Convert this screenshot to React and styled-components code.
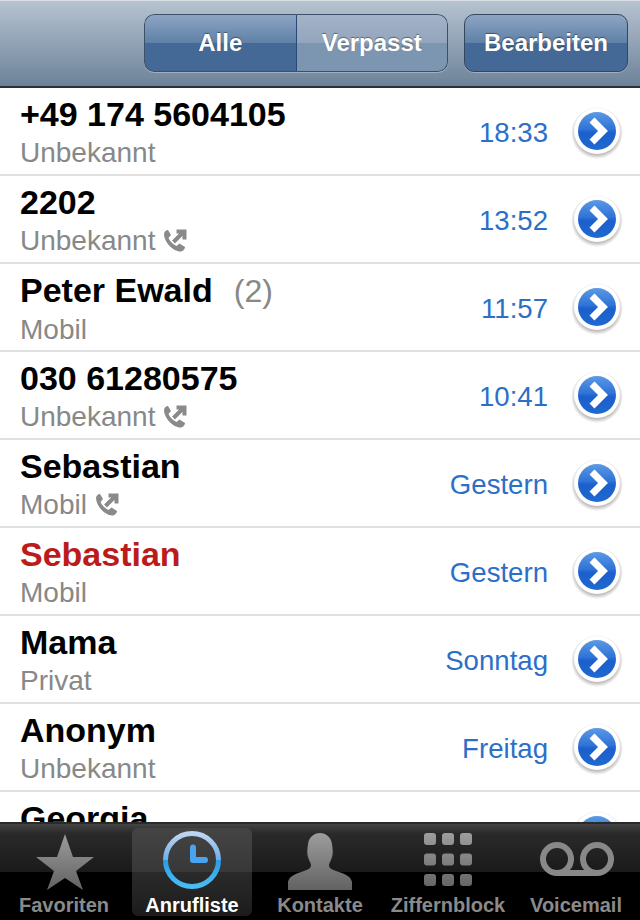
import React from 'react';
import styled, { createGlobalStyle } from 'styled-components';

const GlobalStyle = createGlobalStyle`
  html, body {
    margin: 0;
    padding: 0;
    background: #fff;
  }
`;

const Phone = styled.div`
  width: 640px;
  height: 920px;
  display: flex;
  flex-direction: column;
  overflow: hidden;
  font-family: 'Liberation Sans', Arial, sans-serif;
`;

const NavBar = styled.header`
  flex: none;
  box-sizing: border-box;
  height: 88px;
  padding: 14px 12px 0 144px;
  display: flex;
  gap: 16px;
  align-items: flex-start;
  border-bottom: 2px solid #2d3034;
  border-top: 1px solid #d9dee4;
  background: linear-gradient(#b6c3d0, #6d8299);
`;

const Segments = styled.div`
  display: flex;
  width: 304px;
  height: 58px;
  margin-top: -1px;
  border-radius: 10px;
  overflow: hidden;
  box-shadow: 0 1px 0 rgba(255, 255, 255, 0.3);
`;

const Segment = styled.div`
  flex: 1;
  display: flex;
  align-items: center;
  justify-content: center;
  color: #fff;
  font-size: 24px;
  font-weight: bold;
  text-shadow: 0 -1px 1px rgba(0, 0, 0, 0.4);
  background: ${({ $active }) =>
    $active
      ? 'linear-gradient(#8da5c4 0, #5f80a7 50%, #456996 50%, #456996 100%)'
      : 'linear-gradient(#a3b3c8 0, #93a5bc 50%, #7c95b0 50%, #7c95b0 100%)'};
  border: 1px solid #3c5068;
  border-width: ${({ $active }) => ($active ? '1px 1px 1px 1px' : '1px 1px 1px 0')};
  border-right-color: ${({ $active }) => ($active ? '#264a78' : '#3c5068')};
  border-radius: ${({ $active }) => ($active ? '10px 0 0 10px' : '0 10px 10px 0')};
`;

const EditButton = styled(Segment)`
  flex: none;
  box-sizing: border-box;
  width: 164px;
  height: 58px;
  margin-top: -1px;
  border-width: 1px;
  border-radius: 10px;
  border-color: #33485f;
  box-shadow: 0 1px 0 rgba(255, 255, 255, 0.3);
`;

const List = styled.div`
  flex: 1;
  min-height: 0;
  overflow: hidden;
`;

const Row = styled.div`
  box-sizing: border-box;
  height: 88px;
  display: flex;
  align-items: center;
  padding: 0 20px;
  border-bottom: 2px solid #e0e0e0;
  background: #fff;
`;

const Info = styled.div`
  flex: 1;
  min-width: 0;
  margin-top: 2px;
`;

const Name = styled.div`
  font-size: 34px;
  line-height: 38px;
  font-weight: bold;
  color: ${({ $missed }) => ($missed ? '#bb1b1b' : '#000')};
  white-space: nowrap;
`;

const Count = styled.span`
  margin-left: 21px;
  font-weight: normal;
  font-size: 32px;
  color: #888;
`;

const Sub = styled.div`
  display: flex;
  align-items: center;
  gap: 8px;
  margin-top: 4px;
  font-size: 28px;
  line-height: 32px;
  color: #888;
`;

const Time = styled.div`
  margin: 4px 21px 0 0;
  font-size: 27.6px;
  color: #2c6fc9;
  white-space: nowrap;
`;

const Disclosure = styled.svg`
  flex: none;
  width: 56px;
  height: 56px;
  margin-right: -5px;
`;

const TabBar = styled.nav`
  position: absolute;
  top: 822px;
  left: 0;
  width: 640px;
  height: 98px;
  box-sizing: border-box;
  display: grid;
  grid-template-columns: repeat(5, 128px);
  padding: 4px 0 4px;
  border-top: 2px solid #2a2a2a;
  background: linear-gradient(#444 0, #2a2a2a 10%, #1a1a1a 50%, #000 50%, #000 100%);
`;

const Tab = styled.div`
  display: flex;
  flex-direction: column;
  align-items: center;
  justify-content: flex-end;
  margin: 0 4px;
  border-radius: 6px;
  background: ${({ $active }) =>
    $active ? 'linear-gradient(#444 0, #383838 50%, #2a2a2a 50%, #1c1c1c 100%)' : 'none'};
`;

const TabIcon = styled.svg`
  width: 80px;
  height: 62px;
  flex: none;
`;

const TabLabel = styled.div`
  font-size: 20px;
  line-height: 24px;
  font-weight: bold;
  white-space: nowrap;
  position: relative;
  top: 1px;
  color: ${({ $active }) => ($active ? '#fff' : '#8a8a8a')};
`;

const calls = [
  { name: '+49 174 5604105', sub: 'Unbekannt', time: '18:33' },
  { name: '2202', sub: 'Unbekannt', time: '13:52', outgoing: true },
  { name: 'Peter Ewald', count: '(2)', sub: 'Mobil', time: '11:57' },
  { name: '030 61280575', sub: 'Unbekannt', time: '10:41', outgoing: true },
  { name: 'Sebastian', sub: 'Mobil', time: 'Gestern', outgoing: true },
  { name: 'Sebastian', sub: 'Mobil', time: 'Gestern', missed: true },
  { name: 'Mama', sub: 'Privat', time: 'Sonntag' },
  { name: 'Anonym', sub: 'Unbekannt', time: 'Freitag' },
  { name: 'Georgia', sub: 'Mobil', time: 'Freitag' },
];

function OutgoingIcon() {
  return (
    <svg width="24" height="24" viewBox="0 0 24 24">
      <path
        d="M1 5 C1 3 3 1 5 1 L8 6 L5.5 9 C7 12.5 10 15.5 13.5 17 L16.5 14.5 L22 18 C22 20 20 22.5 17.5 22.5 C10 22.5 1 13 1 5 Z"
        fill="#8a8a8a"
      />
      <path d="M10.5 13 L20 3.5 M13.5 2.5 L21.5 2.5 L21.5 10.5" stroke="#8a8a8a" strokeWidth="4" fill="none" />
    </svg>
  );
}

function DisclosureButton() {
  return (
    <Disclosure viewBox="0 0 56 56">
      <defs>
        <linearGradient id="blue" x1="0" y1="0" x2="0" y2="1">
          <stop offset="0" stopColor="#5b9ae6" />
          <stop offset="0.45" stopColor="#2f74d6" />
          <stop offset="0.55" stopColor="#1a5fcb" />
          <stop offset="1" stopColor="#2069d3" />
        </linearGradient>
        <radialGradient id="shade" cx="0.5" cy="0.5" r="0.5">
          <stop offset="0.8" stopColor="#000" stopOpacity="0.3" />
          <stop offset="1" stopColor="#000" stopOpacity="0" />
        </radialGradient>
      </defs>
      <circle cx="28" cy="30" r="26" fill="url(#shade)" />
      <circle cx="28" cy="28" r="23" fill="#fff" />
      <circle cx="28" cy="28" r="19" fill="url(#blue)" />
      <path d="M23 17 L34 28 L23 39" fill="none" stroke="#fff" strokeWidth="7" />
    </Disclosure>
  );
}

function App() {
  return (
    <Phone>
      <GlobalStyle />
      <NavBar>
        <Segments>
          <Segment $active>Alle</Segment>
          <Segment>Verpasst</Segment>
        </Segments>
        <EditButton $active>Bearbeiten</EditButton>
      </NavBar>
      <List>
        {calls.map((call, i) => (
          <Row key={i}>
            <Info>
              <Name $missed={call.missed}>
                {call.name}
                {call.count && <Count>{call.count}</Count>}
              </Name>
              <Sub>
                {call.sub}
                {call.outgoing && <OutgoingIcon />}
              </Sub>
            </Info>
            <Time>{call.time}</Time>
            <DisclosureButton />
          </Row>
        ))}
      </List>
      <TabBar>
        <Tab>
          <TabIcon viewBox="0 0 80 62">
            <defs>
              <linearGradient id="grey" gradientUnits="userSpaceOnUse" x1="0" y1="0" x2="0" y2="62">
                <stop offset="0" stopColor="#a0a0a0" />
                <stop offset="1" stopColor="#606060" />
              </linearGradient>
            </defs>
            <path d="M41 4 L49 27 L70 27 L52 41 L59 60 L41 48 L23 60 L30 41 L12 27 L33 27 Z" fill="url(#grey)" />
          </TabIcon>
          <TabLabel>Favoriten</TabLabel>
        </Tab>
        <Tab $active>
          <TabIcon viewBox="0 0 80 62">
            <defs>
              <linearGradient id="ring" x1="0" y1="0" x2="0" y2="1">
                <stop offset="0" stopColor="#bcd5f0" />
                <stop offset="0.5" stopColor="#70aeea" />
                <stop offset="0.5" stopColor="#2a9be8" />
                <stop offset="1" stopColor="#49bdf2" />
              </linearGradient>
            </defs>
            <circle cx="40" cy="30" r="26.5" fill="none" stroke="url(#ring)" strokeWidth="5" />
            <path d="M41 17.5 L41 30 L53 30" fill="none" stroke="#4aa3f0" strokeWidth="6" strokeLinecap="round" strokeLinejoin="round" />
          </TabIcon>
          <TabLabel $active>Anrufliste</TabLabel>
        </Tab>
        <Tab>
          <TabIcon viewBox="0 0 80 62">
            <path d="M8 60 L8 52 C9 47 14 44 24 41 C29 39 31 38 31 35 C31 33 29 31 28 27 C27 24 27 20 28 14 C29 7 34 3 40 3 C46 3 51 7 52 14 C53 20 53 24 52 27 C51 31 49 33 49 35 C49 38 51 39 56 41 C66 44 71 47 72 52 L72 60 Z" fill="url(#grey)" />
          </TabIcon>
          <TabLabel>Kontakte</TabLabel>
        </Tab>
        <Tab>
          <TabIcon viewBox="0 0 80 62">
            {[0, 1, 2].flatMap((r) =>
              [0, 1, 2].map((c) => (
                <rect key={`${r}-${c}`} x={16 + c * 18} y={3 + r * 20.5} width="12" height="12" rx="3" fill="url(#grey)" />
              ))
            )}
          </TabIcon>
          <TabLabel>Ziffernblock</TabLabel>
        </Tab>
        <Tab>
          <TabIcon viewBox="0 0 80 62">
            <path d="M21 43 L61 43" stroke="#888" strokeWidth="6" />
            <circle cx="21" cy="29" r="14" fill="none" stroke="#888" strokeWidth="6" />
            <circle cx="61" cy="29" r="14" fill="none" stroke="#888" strokeWidth="6" />
          </TabIcon>
          <TabLabel>Voicemail</TabLabel>
        </Tab>
      </TabBar>
    </Phone>
  );
}

export default App;
